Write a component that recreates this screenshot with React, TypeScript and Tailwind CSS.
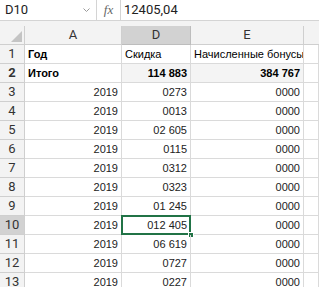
import React from 'react'

const rows: [string, string, string, string][] = [
  ['3', '2019', '0273', '0000'],
  ['4', '2019', '0013', '0000'],
  ['5', '2019', '02 605', '0000'],
  ['6', '2019', '0115', '0000'],
  ['7', '2019', '0312', '0000'],
  ['8', '2019', '0323', '0000'],
  ['9', '2019', '01 245', '0000'],
  ['10', '2019', '012 405', '0000'],
  ['11', '2019', '06 619', '0000'],
  ['12', '2019', '0727', '0000'],
  ['13', '2019', '0227', '0000'],
]

const cell = 'h-[19px] border-r border-b border-[#dadada] px-[3px] flex items-center'

function RowHead({ n, active }: { n: string; active?: boolean }) {
  return (
    <div
      className={`w-[25px] h-[19px] shrink-0 flex items-center justify-center text-[13px] text-[#333] border-r border-b border-[#cfcfcf] ${
        active ? 'bg-[#d2d2d2]' : 'bg-[#f3f3f3]'
      }`}
      style={{ fontFamily: 'Roboto, "Open Sans", sans-serif' }}
    >
      {n}
    </div>
  )
}

export default function App() {
  return (
    <div
      className="w-[319px] h-[287px] overflow-hidden bg-white text-[#000]"
      style={{ fontFamily: '"Liberation Sans", Arial, sans-serif' }}
    >
      {/* formula bar */}
      <div className="h-[21px] flex items-center bg-white border-b border-[#d4d4d4]">
        <div className="w-[97px] h-full flex items-center justify-between pl-[5px] pr-[4px] border-r border-[#d4d4d4]">
          <span className="text-[13px] text-[#222]" style={{ fontFamily: 'Roboto, sans-serif' }}>D10</span>
          <svg width="7" height="5" viewBox="0 0 7 5" className="mr-[2px]">
            <path d="M0.5 0.5 L3.5 3.5 L6.5 0.5" fill="none" stroke="#9a9a9a" strokeWidth="1" />
          </svg>
        </div>
        <div className="w-[24px] h-full flex items-center justify-center border-r border-[#d4d4d4]">
          <span className="text-[13px] italic text-[#666]" style={{ fontFamily: '"Liberation Serif", serif' }}>fx</span>
        </div>
        <span className="pl-[3px] text-[13px] text-[#222]" style={{ fontFamily: 'Roboto, sans-serif' }}>12405,04</span>
      </div>
      <div className="h-[5px] bg-[#f3f3f3]" />

      {/* column headers */}
      <div className="flex h-[19px] text-[13px] text-[#333]" style={{ fontFamily: 'Roboto, sans-serif' }}>
        <div className="w-[25px] shrink-0 bg-[#f3f3f3] border-r border-b border-[#cfcfcf] relative">
          <div className="absolute right-[2px] bottom-[2px] w-0 h-0 border-l-[11px] border-l-transparent border-b-[11px] border-b-[#c4c4c4]" />
        </div>
        <div className="w-[97px] shrink-0 bg-[#f3f3f3] border-r border-b border-[#cfcfcf] flex items-center justify-center">A</div>
        <div className="w-[69px] shrink-0 bg-[#d2d2d2] border-r border-b border-[#bdbdbd] flex items-center justify-center">D</div>
        <div className="w-[113px] shrink-0 bg-[#f3f3f3] border-r border-b border-[#cfcfcf] flex items-center justify-center">E</div>
        <div className="flex-1 bg-[#f3f3f3] border-b border-[#cfcfcf]" />
      </div>

      {/* row 1 */}
      <div className="flex text-[11px]">
        <RowHead n="1" />
        <div className={`${cell} w-[97px] shrink-0 font-bold`}>Год</div>
        <div className={`${cell} w-[69px] shrink-0`}>Скидка</div>
        <div className={`${cell} w-[113px] shrink-0 whitespace-nowrap overflow-hidden`}>Начисленные бонусы</div>
        <div className={`${cell} flex-1`} />
      </div>

      {/* row 2 */}
      <div className="flex text-[11px] font-bold">
        <RowHead n="2" />
        <div className={`${cell} w-[97px] shrink-0`}>Итого</div>
        <div className={`${cell} w-[69px] shrink-0 justify-end bg-[#f4f4f4]`}>114 883</div>
        <div className={`${cell} w-[113px] shrink-0 justify-end bg-[#f4f4f4]`}>384 767</div>
        <div className={`${cell} flex-1`} />
      </div>

      {rows.map(([n, a, d, e]) => {
        const active = n === '10'
        return (
          <div key={n} className="flex text-[11px] text-[#222]">
            <RowHead n={n} active={active} />
            <div className={`${cell} w-[97px] shrink-0 justify-end`}>{a}</div>
            <div className={`${cell} w-[69px] shrink-0 justify-end relative`}>
              {d}
              {active && (
                <>
                  <div className="absolute -left-[1px] -top-[1px] w-[70px] h-[20px] border-2 border-[#217346]" />
                  <div className="absolute -right-[4px] -bottom-[4px] w-[6px] h-[6px] bg-[#217346] border border-white" />
                </>
              )}
            </div>
            <div className={`${cell} w-[113px] shrink-0 justify-end`}>{e}</div>
            <div className={`${cell} flex-1`} />
          </div>
        )
      })}
    </div>
  )
}
